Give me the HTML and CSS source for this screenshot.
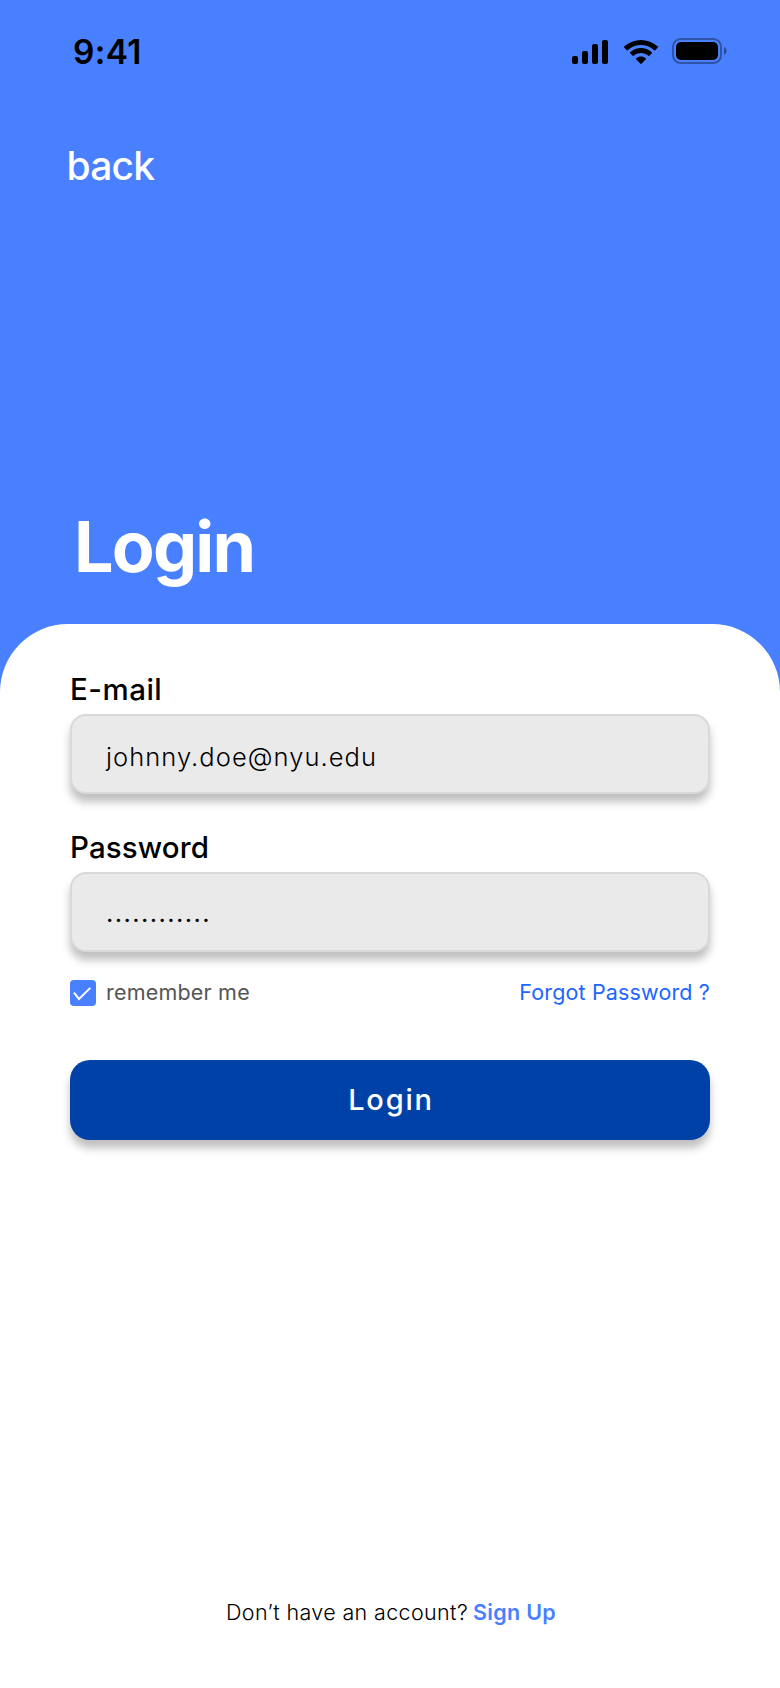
FILE: index.html
```
<!DOCTYPE html>
<html lang="en">
<head>
<meta charset="utf-8">
<title>Login</title>
<link rel="stylesheet" href="styles.css">
</head>
<body>
<div class="screen">
  <header class="hero">
    <div class="status">
      <span class="status-time">9:41</span>
      <div class="status-icons">
        <svg class="signal" width="36" height="24" viewBox="0 0 36 24">
          <rect x="0" y="16" width="6" height="8" rx="2"/>
          <rect x="10" y="11" width="6" height="13" rx="2"/>
          <rect x="20" y="4" width="6" height="20" rx="2"/>
          <rect x="30" y="0" width="6" height="24" rx="2"/>
        </svg>
        <svg class="wifi" width="34" height="24" viewBox="0 0 17.14 12.1">
          <path d="M8.57 2.47C11.06 2.47 13.45 3.42 15.25 5.14C15.39 5.27 15.6 5.27 15.74 5.13L17.03 3.82C17.1 3.75 17.14 3.66 17.14 3.56C17.14 3.46 17.1 3.37 17.03 3.3C12.3-1.1 4.84-1.1.1 3.3C.03 3.37 0 3.46 0 3.56C0 3.66.03 3.75.1 3.82L1.4 5.13C1.53 5.27 1.75 5.27 1.88 5.14C3.68 3.42 6.08 2.47 8.57 2.47Z"/>
          <path d="M8.57 6.55C9.93 6.55 11.24 7.05 12.25 7.96C12.39 8.1 12.6 8.09 12.74 7.96L14.02 6.66C14.09 6.59 14.13 6.5 14.13 6.4C14.13 6.3 14.09 6.2 14.02 6.13C10.95 3.26 6.19 3.26 3.12 6.13C3.05 6.2 3.01 6.3 3.01 6.4C3.01 6.5 3.05 6.59 3.12 6.66L4.4 7.96C4.54 8.09 4.75 8.1 4.89 7.96C5.9 7.05 7.21 6.55 8.57 6.55Z"/>
          <path d="M11.09 9.48C11.09 9.58 11.05 9.68 10.98 9.74L8.82 11.95C8.75 12.02 8.66 12.05 8.57 12.05C8.48 12.05 8.39 12.02 8.32 11.95L6.16 9.74C6.09 9.68 6.05 9.58 6.05 9.48C6.06 9.38 6.1 9.29 6.17 9.23C7.56 8.04 9.58 8.04 10.97 9.23C11.04 9.29 11.08 9.38 11.09 9.48Z"/>
        </svg>
        <svg class="battery" width="55" height="26" viewBox="0 0 55 26">
          <rect x="1" y="1" width="48" height="24" rx="7.6" fill="none" stroke="#000" stroke-width="2" opacity=".35"/>
          <path d="M52 9v8c1.6-.7 2.7-2.3 2.7-4s-1.1-3.3-2.7-4Z" opacity=".4"/>
          <rect x="4" y="4" width="42" height="18" rx="5"/>
        </svg>
      </div>
    </div>
    <a class="back">back</a>
    <h1 class="title">Login</h1>
  </header>
  <main class="card">
    <div class="field">
      <div class="label">E-mail</div>
      <div class="input input-email">johnny.doe@nyu.edu</div>
    </div>
    <div class="field">
      <div class="label label-password">Password</div>
      <div class="input input-password">............</div>
    </div>
    <div class="options">
      <div class="remember">
        <svg class="check" width="26" height="26" viewBox="0 0 26 26">
          <rect width="26" height="26" rx="4" fill="#4980ff"/>
          <path d="M4 12.6L9 19L20.3 7.9" fill="none" stroke="#fff" stroke-width="2"/>
        </svg>
        <span class="remember-text">remember me</span>
      </div>
      <a class="forgot">Forgot Password ?</a>
    </div>
    <div class="button">Login</div>
    <p class="footer"><span class="prompt">Don’t have an account?</span><a class="signup">Sign Up</a></p>
  </main>
</div>
</body>
</html>
```
FILE: styles.css
```
body {
  margin: 0;
  font-family: Inter, "Liberation Sans", sans-serif;
  color: #000;
}
.screen {
  display: flex;
  flex-direction: column;
  width: 780px;
  height: 1688px;
  overflow: hidden;
  background: #4980ff;
}
.hero {
  box-sizing: border-box;
  height: 624px;
  flex: none;
}
.status {
  box-sizing: border-box;
  height: 104px;
  padding: 0 53px 0 73px;
  display: flex;
  align-items: center;
  justify-content: space-between;
}
.status-time {
  font-size: 33.5px;
  font-weight: 600;
  letter-spacing: 0.3px;
  line-height: 40px;
}
.status-icons {
  display: flex;
  align-items: center;
}
.signal { margin-right: 16px; }
.wifi { margin-right: 14px; }
.battery { margin-top: -2px; }
.back {
  display: block;
  margin: 38px 0 0 66.5px;
  font-size: 39px;
  font-weight: 450;
  letter-spacing: -0.8px;
  line-height: 48px;
  color: #fff;
}
.title {
  margin: 315px 0 0 74px;
  font-size: 70px;
  font-weight: 700;
  letter-spacing: -1.8px;
  line-height: 84px;
  color: #fff;
}
.card {
  box-sizing: border-box;
  flex: 1;
  display: flex;
  flex-direction: column;
  padding: 45px 70px 56px;
  border-radius: 68px 68px 0 0;
  background: #fff;
}
.field { margin-bottom: 33px; }
.field + .field { margin-bottom: 28px; }
.label {
  margin-bottom: 4px;
  font-size: 29.5px;
  font-weight: 500;
  letter-spacing: 0.5px;
  line-height: 41px;
}
.label-password { letter-spacing: 0.1px; }
.input {
  box-sizing: border-box;
  height: 80px;
  padding-left: 34px;
  border: 2px solid #d9d9d9;
  border-radius: 16px;
  background: #eaeaea;
  box-shadow: 0 8px 8px rgba(0, 0, 0, 0.25);
  font-size: 25.5px;
  line-height: 81px;
}
.input-email {
  font-weight: 300;
  letter-spacing: 1.05px;
}
.input-password {
  line-height: 77px;
  letter-spacing: 1.4px;
}
.options {
  display: flex;
  justify-content: space-between;
  align-items: center;
  height: 26px;
  margin-bottom: 54px;
  font-size: 21.5px;
  line-height: 26px;
  letter-spacing: 0.2px;
}
.remember {
  display: flex;
  align-items: center;
  gap: 10px;
}
.remember-text {
  padding-bottom: 2px;
  color: #555;
}
.forgot {
  padding-bottom: 2px;
  color: #2066ff;
  letter-spacing: 0.15px;
}
.button {
  height: 80px;
  border-radius: 20px;
  background: #0041a8;
  box-shadow: 0 8px 8px rgba(0, 0, 0, 0.25);
  color: #fff;
  font-size: 29px;
  font-weight: 450;
  letter-spacing: 1.8px;
  line-height: 80px;
  text-indent: 2px;
  text-align: center;
}
.footer {
  display: flex;
  justify-content: center;
  gap: 5px;
  margin: auto 0 0 2px;
  font-size: 21.5px;
  line-height: 40px;
}
.prompt {
  font-weight: 300;
  letter-spacing: 0.36px;
}
.signup {
  font-weight: 600;
  letter-spacing: 0.3px;
  color: #4980ff;
}
```
